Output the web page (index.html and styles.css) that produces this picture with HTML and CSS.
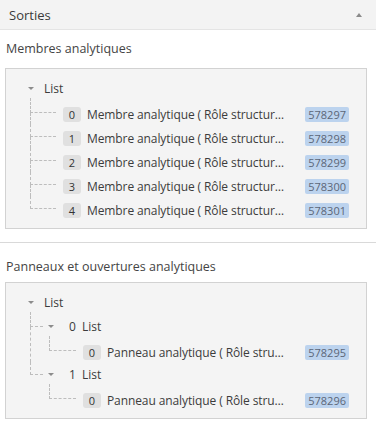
FILE: index.html
```html
<!DOCTYPE html>
<html>
<head>
  <title>Sorties</title>
  <link rel="stylesheet" href="styles.css">
</head>
<body>
  <div class="panel">
    <div class="panel-header">
      <span class="panel-title">Sorties</span>
      <span class="caret-up"></span>
    </div>

    <div class="section">
      <div class="section-title">Membres analytiques</div>
      <div class="tree-box">
        <div class="node-row root-row"><span class="toggle"></span><span class="node-label">List</span></div>
        <ul class="tree">
          <li class="leaf"><span class="idx">0</span><span class="name">Membre analytique ( Rôle structurel : Poutre )</span><span class="ref">578297</span></li>
          <li class="leaf"><span class="idx">1</span><span class="name">Membre analytique ( Rôle structurel : Poutre )</span><span class="ref">578298</span></li>
          <li class="leaf"><span class="idx">2</span><span class="name">Membre analytique ( Rôle structurel : Poutre )</span><span class="ref">578299</span></li>
          <li class="leaf"><span class="idx">3</span><span class="name">Membre analytique ( Rôle structurel : Poutre )</span><span class="ref">578300</span></li>
          <li class="leaf"><span class="idx">4</span><span class="name">Membre analytique ( Rôle structurel : Poutre )</span><span class="ref">578301</span></li>
        </ul>
      </div>
    </div>

    <div class="section section-next">
      <div class="section-title">Panneaux et ouvertures analytiques</div>
      <div class="tree-box">
        <div class="node-row root-row"><span class="toggle"></span><span class="node-label">List</span></div>
        <ul class="tree">
          <li class="branch">
            <div class="node-row"><span class="toggle"></span><span class="key">0</span><span class="node-label">List</span></div>
            <ul class="tree sub">
              <li class="leaf"><span class="idx">0</span><span class="name">Panneau analytique ( Rôle structurel : Dalle )</span><span class="ref">578295</span></li>
            </ul>
          </li>
          <li class="branch">
            <div class="node-row"><span class="toggle"></span><span class="key">1</span><span class="node-label">List</span></div>
            <ul class="tree sub">
              <li class="leaf"><span class="idx">0</span><span class="name">Panneau analytique ( Rôle structurel : Dalle )</span><span class="ref">578296</span></li>
            </ul>
          </li>
        </ul>
      </div>
    </div>
  </div>
</body>
</html>
```

FILE: styles.css
```css
body {
  margin: 0;
  background: #fff;
  font-family: "Open Sans", "Noto Sans", sans-serif;
  font-size: 12px;
  color: #3c3c3c;
}

.panel-header {
  height: 29px;
  display: flex;
  align-items: center;
  justify-content: space-between;
  padding: 0 14px 0 9px;
  background: #f3f3f3;
  border-bottom: 1px solid #e4e4e4;
}

.panel-title {
  font-size: 13px;
  color: #3a3a3a;
}

.caret-up {
  width: 0;
  height: 0;
  border-left: 3.5px solid transparent;
  border-right: 3.5px solid transparent;
  border-bottom: 4px solid #8a8a8a;
}

.section {
  padding: 10px 9px 13px 5px;
}

.section-next {
  padding-top: 15px;
  border-top: 1px solid #d9d9d9;
}

.section-title {
  height: 18px;
  line-height: 18px;
  padding-left: 1px;
  margin-bottom: 10px;
  font-size: 12.5px;
  color: #444;
}

.section-next .section-title {
  margin-bottom: 6px;
}

.tree-box {
  background: #f4f4f4;
  border: 1px solid #d2d2d2;
  padding: 7px 17px 8px 0;
}

.node-row {
  height: 24px;
  display: flex;
  align-items: center;
}

.root-row {
  padding-left: 22px;
}

.toggle {
  width: 0;
  height: 0;
  border-left: 3px solid transparent;
  border-right: 3px solid transparent;
  border-top: 3px solid #8c8c8c;
  margin-right: 10px;
}

.tree {
  list-style: none;
  margin: 0;
  padding: 0 0 0 24px;
}

.tree.sub {
  padding-left: 19px;
}

.tree li {
  position: relative;
}

/* dashed connectors */
.tree li::before {
  content: "";
  position: absolute;
  left: 0;
  top: 0;
  width: 25px;
  height: 12px;
  border-left: 1px dashed #bdbdbd;
  border-bottom: 1px dashed #bdbdbd;
}

.tree li:first-child::before {
  top: -2px;
  height: 14px;
}

.tree li:not(:last-child)::after {
  content: "";
  position: absolute;
  left: 0;
  top: 13px;
  bottom: 0;
  border-left: 1px dashed #bdbdbd;
}

.tree .sub li::before {
  width: 26px;
}

.tree li.branch::before {
  width: 12px;
}

.branch > .node-row {
  padding-left: 18px;
}

.branch .toggle {
  margin-right: 15px;
}

.key {
  margin-right: 6px;
}

.leaf {
  height: 20px;
  padding: 4px 0 0 33px;
  display: flex;
  align-items: center;
}

.sub .leaf {
  padding-left: 34px;
}

.idx {
  flex: none;
  width: 18px;
  height: 15px;
  line-height: 15px;
  text-align: center;
  border-radius: 3px;
  background: #e0e0e0;
  font-size: 11px;
  color: #333;
  margin-right: 6px;
}

.name {
  flex: 1;
  min-width: 0;
  white-space: nowrap;
  overflow: hidden;
  text-overflow: ellipsis;
  letter-spacing: -0.1px;
}

.ref {
  flex: none;
  height: 15px;
  line-height: 15px;
  padding: 0 3px;
  margin-left: 16px;
  border-radius: 2px;
  background: #bcd3ee;
  font-size: 11px;
  color: #5b6677;
}
```
